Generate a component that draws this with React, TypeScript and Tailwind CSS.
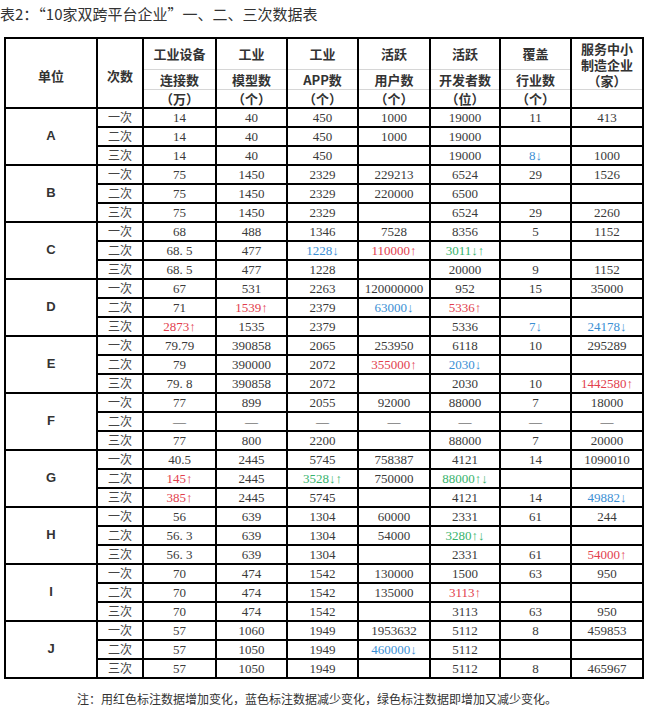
import React from "react";

type Tone = "r" | "b" | "g";
type Cell = string | [string, Tone];

interface Group {
  unit: string;
  rows: Cell[][];
}

const TONE: Record<Tone, string> = {
  r: "text-[#e23e4d]",
  b: "text-[#3b8fd4]",
  g: "text-[#37b36c]",
};

const LABELS = ["一次", "二次", "三次"];
const DASH = "—";

const GROUPS: Group[] = [
  {
    unit: "A",
    rows: [
      ["14", "40", "450", "1000", "19000", "11", "413"],
      ["14", "40", "450", "1000", "19000", "", ""],
      ["14", "40", "450", "", "19000", ["8↓", "b"], "1000"],
    ],
  },
  {
    unit: "B",
    rows: [
      ["75", "1450", "2329", "229213", "6524", "29", "1526"],
      ["75", "1450", "2329", "220000", "6500", "", ""],
      ["75", "1450", "2329", "", "6524", "29", "2260"],
    ],
  },
  {
    unit: "C",
    rows: [
      ["68", "488", "1346", "7528", "8356", "5", "1152"],
      ["68. 5", "477", ["1228↓", "b"], ["110000↑", "r"], ["3011↓↑", "g"], "", ""],
      ["68. 5", "477", "1228", "", "20000", "9", "1152"],
    ],
  },
  {
    unit: "D",
    rows: [
      ["67", "531", "2263", "120000000", "952", "15", "35000"],
      ["71", ["1539↑", "r"], "2379", ["63000↓", "b"], ["5336↑", "r"], "", ""],
      [["2873↑", "r"], "1535", "2379", "", "5336", ["7↓", "b"], ["24178↓", "b"]],
    ],
  },
  {
    unit: "E",
    rows: [
      ["79.79", "390858", "2065", "253950", "6118", "10", "295289"],
      ["79", "390000", "2072", ["355000↑", "r"], ["2030↓", "b"], "", ""],
      ["79. 8", "390858", "2072", "", "2030", "10", ["1442580↑", "r"]],
    ],
  },
  {
    unit: "F",
    rows: [
      ["77", "899", "2055", "92000", "88000", "7", "18000"],
      [DASH, DASH, DASH, DASH, DASH, DASH, DASH],
      ["77", "800", "2200", "", "88000", "7", "20000"],
    ],
  },
  {
    unit: "G",
    rows: [
      ["40.5", "2445", "5745", "758387", "4121", "14", "1090010"],
      [["145↑", "r"], "2445", ["3528↓↑", "g"], "750000", ["88000↑↓", "g"], "", ""],
      [["385↑", "r"], "2445", "5745", "", "4121", "14", ["49882↓", "b"]],
    ],
  },
  {
    unit: "H",
    rows: [
      ["56", "639", "1304", "60000", "2331", "61", "244"],
      ["56. 3", "639", "1304", "54000", ["3280↑↓", "g"], "", ""],
      ["56. 3", "639", "1304", "", "2331", "61", ["54000↑", "r"]],
    ],
  },
  {
    unit: "I",
    rows: [
      ["70", "474", "1542", "130000", "1500", "63", "950"],
      ["70", "474", "1542", "135000", ["3113↑", "r"], "", ""],
      ["70", "474", "1542", "", "3113", "63", "950"],
    ],
  },
  {
    unit: "J",
    rows: [
      ["57", "1060", "1949", "1953632", "5112", "8", "459853"],
      ["57", "1050", "1949", ["460000↓", "b"], "5112", "", ""],
      ["57", "1050", "1949", "", "5112", "8", "465967"],
    ],
  },
];

// header text per column: [row 1, row 2, row 3]
const HEAD: string[][] = [
  ["工业设备", "连接数", "（万）"],
  ["工业", "模型数", "（个）"],
  ["工业", "APP数", "（个）"],
  ["活跃", "用户数", "（个）"],
  ["活跃", "开发者数", "（位）"],
  ["覆盖", "行业数", "（个）"],
];

const COLS = [92, 46, 73, 71, 71, 72, 70, 71, 72];

const cjk = "font-['Noto_Sans_CJK_SC',sans-serif]";
const serif = "font-['Liberation_Serif','Noto_Sans_CJK_SC',serif]";

const DataCell: React.FC<{ cell: Cell }> = ({ cell }) => {
  const [text, tone] = typeof cell === "string" ? [cell, undefined] : cell;
  return (
    <td
      className={`border-2 border-black p-0 text-center align-middle text-[13px] leading-none ${serif} ${
        tone ? TONE[tone] : "text-[#3a3a3a]"
      }`}
    >
      {text}
    </td>
  );
};

export default function App() {
  return (
    <div className="w-[646px] h-[705px] bg-white overflow-hidden">
      <p className={`pt-[4px] pl-0 text-[15px] leading-[20px] text-[#333] ${cjk}`}>
        表2：“10家双跨平台企业”一、二、三次数据表
      </p>

      <table className="mt-[13px] ml-[4px] w-[638px] table-fixed border-collapse">
        <colgroup>
          {COLS.map((w, i) => (
            <col key={i} style={{ width: w }} />
          ))}
        </colgroup>
        <thead className={`${cjk} font-bold text-[13px] text-[#333]`}>
          <tr className="h-[31px]">
            <th rowSpan={3} className="border-2 border-black p-0 pt-[5px] font-bold leading-none">
              单位
            </th>
            <th rowSpan={3} className="border-2 border-black p-0 pt-[5px] font-bold leading-none">
              次数
            </th>
            {HEAD.map((h, i) => (
              <th
                key={i}
                className="border-x-2 border-t-2 border-b border-x-black border-t-black border-b-[#d6d6d6] p-0 font-bold leading-none"
              >
                {h[0]}
              </th>
            ))}
            <th
              rowSpan={2}
              className="border-x-2 border-t-2 border-b border-x-black border-t-black border-b-[#d6d6d6] p-0 pt-[2px] align-top font-bold leading-[16px]"
            >
              服务中小
              <br />
              制造企业
              <br />
              （家）
            </th>
          </tr>
          <tr className="h-[20px]">
            {HEAD.map((h, i) => (
              <th
                key={i}
                className="border-x-2 border-b border-x-black border-b-[#d6d6d6] p-0 font-bold leading-none"
              >
                {h[1]}
              </th>
            ))}
          </tr>
          <tr className="h-[18px]">
            {HEAD.map((h, i) => (
              <th
                key={i}
                className="border-x-2 border-b-2 border-black p-0 font-bold leading-none"
              >
                {h[2]}
              </th>
            ))}
            <th className="border-x-2 border-b-2 border-black p-0" />
          </tr>
        </thead>
        <tbody>
          {GROUPS.map((g) => (
            <React.Fragment key={g.unit}>
              {g.rows.map((row, i) => (
                <tr key={i} className="h-[19px]">
                  {i === 0 && (
                    <td
                      rowSpan={3}
                      className="border-2 border-black p-0 text-center align-middle font-['Liberation_Sans',sans-serif] font-bold text-[13px] text-[#333]"
                    >
                      {g.unit}
                    </td>
                  )}
                  <td
                    className={`border-2 border-black p-0 text-center align-middle text-[12px] leading-none text-[#444] ${cjk}`}
                  >
                    {LABELS[i]}
                  </td>
                  {row.map((c, j) => (
                    <DataCell key={j} cell={c} />
                  ))}
                </tr>
              ))}
            </React.Fragment>
          ))}
        </tbody>
      </table>

      <p className={`mt-[12px] pl-[77px] text-[12px] leading-[16px] text-[#333] ${cjk}`}>
        注：用红色标注数据增加变化，蓝色标注数据减少变化，绿色标注数据即增加又减少变化。
      </p>
    </div>
  );
}
